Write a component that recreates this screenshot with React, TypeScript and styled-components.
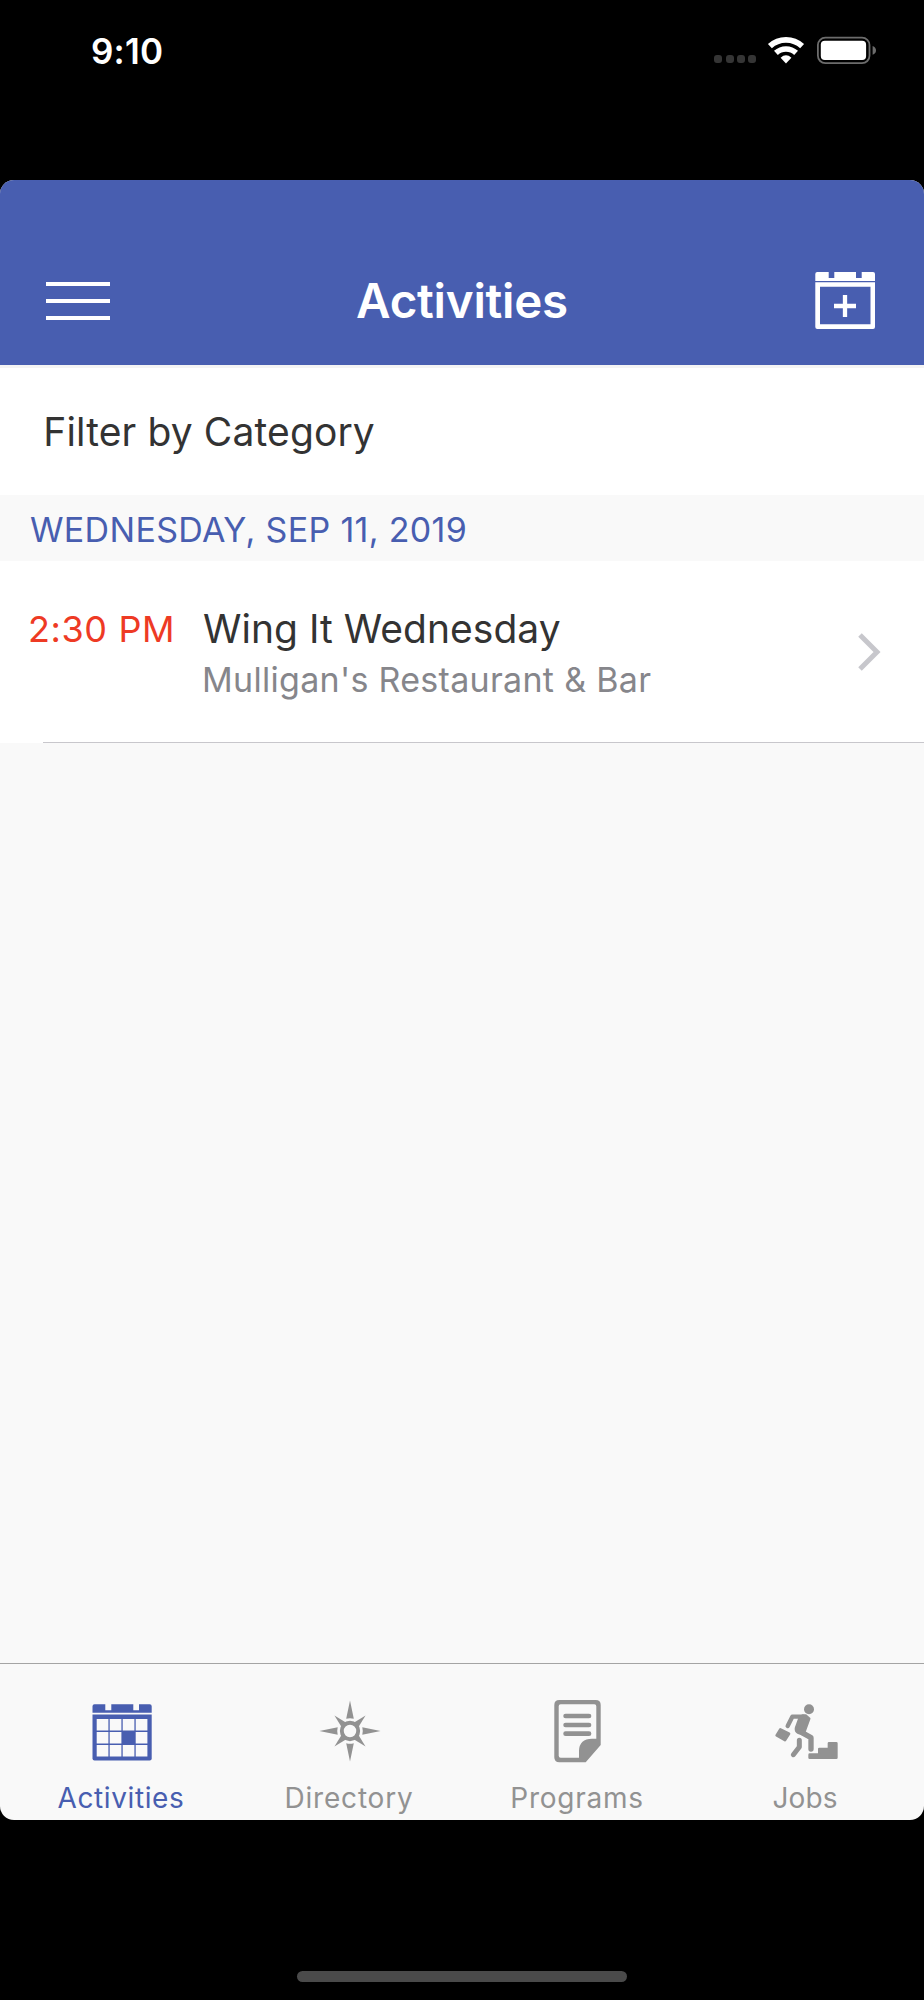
import React from 'react';
import styled, { createGlobalStyle } from 'styled-components';

const BLUE = '#485eb0';
const GREY = '#929292';
const PANEL = '#f9f9f9';

const GlobalStyle = createGlobalStyle`
  *, *::before, *::after { box-sizing: border-box; }
  body {
    margin: 0;
    background: #000;
    font-family: Inter, "Liberation Sans", sans-serif;
  }
`;

const Screen = styled.div`
  display: flex;
  flex-direction: column;
  width: 924px;
  height: 2000px;
  background: #000;
`;

const StatusBar = styled.div`
  display: flex;
  justify-content: space-between;
  align-items: center;
  height: 102px;
  margin-bottom: 78px;
  padding: 0 48px 0 91px;
`;

const Clock = styled.time`
  color: #fff;
  font-size: 35px;
  font-weight: 600;
  line-height: 42px;
  letter-spacing: 0.2px;
`;

const StatusIcons = styled.div`
  display: flex;
  align-items: center;
  margin-bottom: 2px;
`;

const SignalDots = styled.div`
  display: flex;
  gap: 3.3px;
  margin: 18px 10.5px 0 0;
`;

const Dot = styled.i`
  width: 8px;
  height: 8px;
  border-radius: 3px;
  background: #353535;
`;

const WifiIcon = styled.svg`
  width: 38px;
  height: 30px;
  margin-right: 11.3px;
`;

const BatteryIcon = styled.svg`
  width: 60px;
  height: 30px;
`;

const AppCard = styled.div`
  display: flex;
  flex-direction: column;
  height: 1640px;
  overflow: hidden;
  border-radius: 14px;
  background: ${PANEL};
`;

const Header = styled.header`
  display: grid;
  grid-template-columns: 1fr auto 1fr;
  align-items: center;
  height: 185px;
  padding: 57px 46px 0;
  background: ${BLUE};
`;

const MenuButton = styled.button`
  display: flex;
  flex-direction: column;
  gap: 12.3px;
  width: 63.5px;
  padding: 0;
  border: 0;
  background: none;
`;

const MenuBar = styled.span`
  height: 4.7px;
  background: #fff;
`;

const Title = styled.h1`
  margin: 0;
  color: #fff;
  font-size: 47.5px;
  font-weight: 600;
  line-height: 58px;
  letter-spacing: -0.25px;
`;

const AddButton = styled.button`
  justify-self: end;
  margin: 0 3px 2px 0;
  padding: 0;
  border: 0;
  background: none;
  line-height: 0;
`;

const FilterRow = styled.div`
  display: flex;
  align-items: center;
  height: 130px;
  padding: 0 43.3px;
  border-top: 3px solid #f4f4f4;
  background: #fff;
  color: #333;
  font-size: 39px;
  letter-spacing: 0.13px;
`;

const DateHeader = styled.h2`
  display: flex;
  align-items: center;
  height: 66px;
  margin: 0;
  padding: 3px 30px 0;
  color: ${BLUE};
  font-size: 34px;
  font-weight: 400;
  letter-spacing: 0.33px;
`;

const ActivityRow = styled.div`
  display: grid;
  grid-template-columns: 175px 1fr auto;
  height: 182px;
  padding: 0 43px 0 28px;
  background: #fff;
`;

const ActivityTime = styled.time`
  padding-top: 44px;
  color: #ee3a24;
  font-size: 36px;
  line-height: 48px;
  letter-spacing: 0.6px;
`;

const ActivityInfo = styled.div`
  padding-top: 43px;
`;

const ActivityName = styled.div`
  color: #333;
  font-size: 39px;
  line-height: 50px;
  letter-spacing: 0.03px;
`;

const ActivityPlace = styled.div`
  margin-left: -1px;
  color: #86868b;
  font-size: 34px;
  line-height: 52px;
  letter-spacing: 0.3px;
`;

const Chevron = styled.svg`
  align-self: center;
  width: 24px;
  height: 40px;
`;

const Divider = styled.hr`
  width: 881px;
  height: 1px;
  margin: -1px 0 0 43px;
  border: 0;
  background: #c8c7cc;
`;

const EmptySpace = styled.div`
  flex: 1;
`;

const TabBar = styled.nav`
  display: grid;
  grid-template-columns: repeat(4, 228px);
  justify-content: center;
  height: 157px;
  padding-top: 34px;
  border-top: 1px solid #a4a4a4;
`;

const Tab = styled.a<{ $active?: boolean }>`
  display: flex;
  flex-direction: column;
  align-items: center;
  color: ${(p) => (p.$active ? BLUE : GREY)};
`;

const TabIcon = styled.svg`
  width: 68px;
  height: 66px;
  fill: currentColor;
`;

const TabLabel = styled.span<{ $spacing: number }>`
  margin-top: 17px;
  padding-left: 2px;
  font-size: 28px;
  line-height: 34px;
  letter-spacing: ${(p) => p.$spacing}px;
`;

const HomeIndicator = styled.div`
  width: 330px;
  height: 11px;
  margin: 151px 0 0 297px;
  border-radius: 6px;
  background: #4a4a4a;
`;

const columns = [10.7, 23.7, 36.7, 49.7];
const rows = [21, 34, 47];

const CalendarGlyph = () => (
  <TabIcon viewBox="0 0 68 66">
    <path d="M6.5 14.7V8.3q0-2 2-2H19.3V12.3H25.3V6.3H47.3V12.3H53V6.3H63.7q2 0 2 2V14.7Z" />
    <path d="M6.5 16.4H65.7V60.5q0 2-2 2H8.5q-2 0-2-2Z" />
    {rows.map((y, r) =>
      columns.map((x, c) =>
        r === 1 && c === 2 ? null : (
          <rect key={`${r}-${c}`} x={x} y={y} width="11.7" height="11.5" fill={PANEL} />
        ),
      ),
    )}
  </TabIcon>
);

const CompassGlyph = () => (
  <TabIcon viewBox="0 0 68 66">
    <g transform="translate(36 33)">
      {[0, 90, 180, 270].map((a) => (
        <g key={a} transform={`rotate(${a})`}>
          <path d="M0-30.6L3.8-12.3Q0-13.3-3.8-12.3Z" />
          <path transform="rotate(45)" d="M0-22L3.3-8H-3.3Z" />
        </g>
      ))}
      <circle r="8.2" fill={PANEL} stroke="currentColor" strokeWidth="3.9" />
    </g>
  </TabIcon>
);

const DocumentGlyph = () => (
  <TabIcon viewBox="0 0 68 66">
    <path
      fillRule="evenodd"
      d="M17.3 2H53.7q5 0 5 5V47L43.7 64.3H17.3q-5 0-5-5V7q0-5 5-5ZM18.7 6.3q-2 0-2 2V57.7q0 2 2 2H37V52.5Q37.5 41 50 40.7H54.3V8.3q0-2-2-2Z"
    />
    <path d="M23.6 18H47M23.6 27H47M23.6 35.7H47" stroke="currentColor" strokeWidth="4.7" strokeLinecap="round" />
  </TabIcon>
);

const ClimberGlyph = () => (
  <TabIcon viewBox="90 144 204 198" stroke="currentColor" strokeLinejoin="round" strokeLinecap="round">
    <circle cx="207" cy="178" r="15" stroke="none" />
    <path d="M143 228L157 200H190" fill="none" strokeWidth="13" />
    <path d="M178 205L188 196H197L208 206L193 247L213 262V297L212 262L175 249Q165 244 168 233Z" strokeWidth="7" />
    <path d="M190 250L213 263V297" fill="none" strokeWidth="16" />
    <path d="M178 271V291L160 314" fill="none" strokeWidth="15" />
    <path d="M121 238L147 251L135 270L110 256Z" strokeWidth="8" />
    <path d="M209 314H238V297H267V280H289V323H209Z" strokeWidth="8" />
  </TabIcon>
);

const tabs = [
  { label: 'Activities', Glyph: CalendarGlyph, spacing: 0.6, active: true },
  { label: 'Directory', Glyph: CompassGlyph, spacing: 0.82 },
  { label: 'Programs', Glyph: DocumentGlyph, spacing: 0.75 },
  { label: 'Jobs', Glyph: ClimberGlyph, spacing: 0.1 },
];

export default function App() {
  return (
    <Screen>
      <GlobalStyle />
      <StatusBar>
        <Clock>9:10</Clock>
        <StatusIcons>
          <SignalDots>
            <Dot />
            <Dot />
            <Dot />
            <Dot />
          </SignalDots>
          <WifiIcon viewBox="0 0 38 30" fill="none" stroke="#fff">
            <path d="M2.9 11.2A23.8 23.8 0 0 1 35.1 11.2" strokeWidth="5.8" />
            <path d="M8.9 17.9A14.9 14.9 0 0 1 29.1 17.9" strokeWidth="5.6" />
            <path d="M19 28.5L13.6 22.8Q19 17.9 24.4 22.8Z" fill="#fff" stroke="none" />
          </WifiIcon>
          <BatteryIcon viewBox="0 0 60 30">
            <rect x="1.9" y="2.6" width="51.6" height="25.6" rx="7.5" fill="none" stroke="#6c6c6c" strokeWidth="1.8" />
            <rect x="4.8" y="5.8" width="45.3" height="19.2" rx="4" fill="#fff" />
            <path d="M56.6 11Q60 12.4 60 15.4T56.6 19.8Z" fill="#6c6c6c" />
          </BatteryIcon>
        </StatusIcons>
      </StatusBar>

      <AppCard>
        <Header>
          <MenuButton aria-label="Menu">
            <MenuBar />
            <MenuBar />
            <MenuBar />
          </MenuButton>
          <Title>Activities</Title>
          <AddButton aria-label="Add activity">
            <svg width="60" height="57" viewBox="0 0 60 57" fill="#fff">
              <path d="M.3 9V2q0-2 2-2H13.7V6H19.3V0H41V6H46.7V0H58q2 0 2 2V9Z" />
              <path
                fillRule="evenodd"
                d="M.3 10.3H60V55q0 2-2 2H2.3q-2 0-2-2ZM5 14.7V52.3H55.5V14.7Z"
              />
              <path d="M30 23V45M19 34H41" stroke="#fff" strokeWidth="4.3" />
            </svg>
          </AddButton>
        </Header>

        <FilterRow>Filter by Category</FilterRow>
        <DateHeader>WEDNESDAY, SEP 11, 2019</DateHeader>
        <ActivityRow>
          <ActivityTime>2:30 PM</ActivityTime>
          <ActivityInfo>
            <ActivityName>Wing It Wednesday</ActivityName>
            <ActivityPlace>Mulligan's Restaurant &amp; Bar</ActivityPlace>
          </ActivityInfo>
          <Chevron viewBox="0 0 24 40" fill="none" stroke="#c7c7cc" strokeWidth="5">
            <path d="M3 3L20 20L3 37" />
          </Chevron>
        </ActivityRow>
        <Divider />
        <EmptySpace />

        <TabBar>
          {tabs.map(({ label, Glyph, spacing, active }) => (
            <Tab key={label} $active={active}>
              <Glyph />
              <TabLabel $spacing={spacing}>{label}</TabLabel>
            </Tab>
          ))}
        </TabBar>
      </AppCard>

      <HomeIndicator />
    </Screen>
  );
}
